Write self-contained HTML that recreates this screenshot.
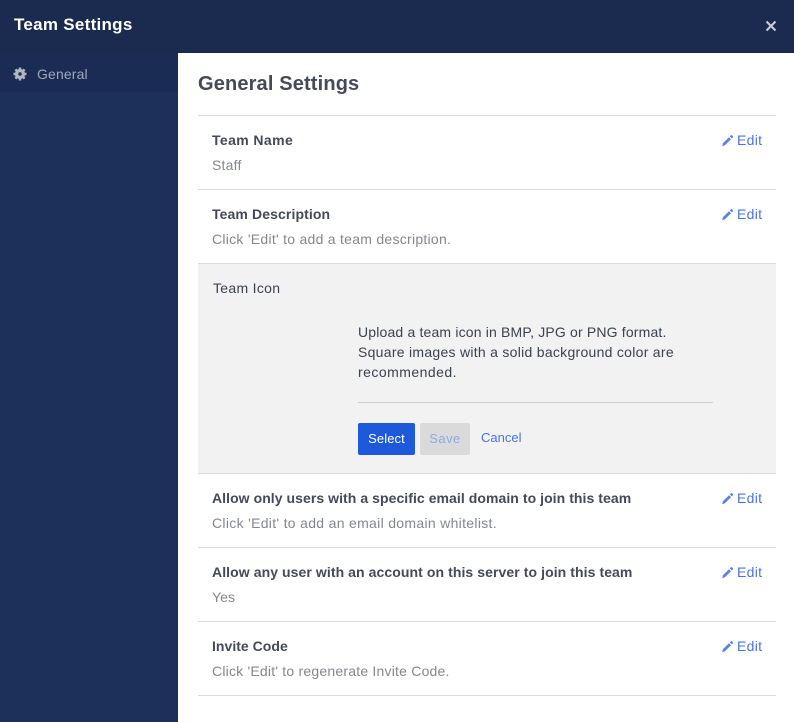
<!DOCTYPE html>
<html>
<head>
<meta charset="utf-8">
<style>
html,body{margin:0;padding:0;background:#fff}
body{width:794px;height:722px;position:relative;overflow:hidden;font-family:"Liberation Sans",sans-serif;font-size:14px;color:#3d3c40}
.a{position:absolute;white-space:nowrap}
.line{position:absolute;height:1px;background:#dcdcdc}
.t{font-weight:700;color:#454958;line-height:20px;font-size:14px;letter-spacing:.06px}
.v{color:#85878f;line-height:20px;font-size:14px;letter-spacing:.27px}
.e{color:#4a75de;line-height:20px;font-size:14px;letter-spacing:.3px}
svg{position:absolute;display:block}
</style>
</head>
<body>
<div class="a" style="left:0;top:0;width:794px;height:53px;background:#1b2b4f"></div>
<div class="a" style="left:0;top:53px;width:178px;height:669px;background:#1d3059"></div>
<div class="a" style="left:0;top:53px;width:178px;height:39px;background:#1a2c53"></div>
<div class="a" style="left:14px;top:15px;line-height:20px;font-size:17px;font-weight:700;color:#fff;letter-spacing:.28px">Team Settings</div>
<svg style="left:765px;top:19.5px" width="12" height="12" viewBox="0 0 12 12"><path d="M1.5 1.5L10.5 10.5M10.5 1.5L1.5 10.5" stroke="#c9ccd4" stroke-width="2.1" fill="none"/></svg>
<svg style="left:12.7px;top:66.7px" width="14" height="14" viewBox="0 0 14 14"><circle cx="7" cy="7" r="3.7" fill="none" stroke="#b0b6c4" stroke-width="2.8"/><path d="M7 .5V13.5M.5 7H13.5M2.4 2.4L11.6 11.6M11.6 2.4L2.4 11.6" stroke="#b0b6c4" stroke-width="2.4"/><circle cx="7" cy="7" r="1.7" fill="#1a2c53"/></svg>
<div class="a" style="left:37px;top:64px;line-height:20px;color:#a0a7b8;letter-spacing:.14px">General</div>

<div class="a" style="left:198px;top:72px;line-height:24px;font-size:20px;font-weight:700;color:#454958;letter-spacing:.15px">General Settings</div>

<div class="line" style="left:198px;top:115px;width:578px"></div>
<div class="a t" style="left:212px;top:130px;letter-spacing:.4px">Team Name</div>
<div class="a v" style="left:212px;top:155px;letter-spacing:.22px">Staff</div>
<svg style="left:721px;top:134px" width="13" height="13" viewBox="0 0 13 13"><path d="M1.2 12.3L1.9 9.3L8 3.2L10 5.2L3.9 11.3Z" fill="#5b82e0"/><path d="M8.8 2.4L10 1.2Q10.5 .9 11 1.2L12 2.2Q12.3 2.7 12 3.2L10.8 4.4Z" fill="#5b82e0"/></svg>
<div class="a e" style="left:737px;top:130px">Edit</div>

<div class="line" style="left:198px;top:189px;width:578px"></div>
<div class="a t" style="left:212px;top:204px;letter-spacing:.11px">Team Description</div>
<div class="a v" style="left:212px;top:229px">Click 'Edit' to add a team description.</div>
<svg style="left:721px;top:208px" width="13" height="13" viewBox="0 0 13 13"><path d="M1.2 12.3L1.9 9.3L8 3.2L10 5.2L3.9 11.3Z" fill="#5b82e0"/><path d="M8.8 2.4L10 1.2Q10.5 .9 11 1.2L12 2.2Q12.3 2.7 12 3.2L10.8 4.4Z" fill="#5b82e0"/></svg>
<div class="a e" style="left:737px;top:204px">Edit</div>

<div class="a" style="left:198px;top:263px;width:578px;height:210px;background:#f2f2f2"></div>
<div class="line" style="left:198px;top:263px;width:578px"></div>
<div class="a" style="left:213px;top:278px;line-height:20px;color:#3d4150;letter-spacing:.3px">Team Icon</div>
<div class="a" style="left:358px;top:322px;line-height:20px;color:#3d4150;letter-spacing:.17px">Upload a team icon in BMP, JPG or PNG format.</div>
<div class="a" style="left:358px;top:342px;line-height:20px;color:#3d4150;letter-spacing:.28px">Square images with a solid background color are</div>
<div class="a" style="left:358px;top:362px;line-height:20px;color:#3d4150;letter-spacing:.47px">recommended.</div>
<div class="line" style="left:358px;top:402px;width:355px;background:#cfcfcf"></div>
<div class="a" style="left:358px;top:423px;width:57px;height:32px;background:#1e59dc;border-radius:2px;color:#fff;font-size:13px;line-height:31px;text-align:center;letter-spacing:.1px">Select</div>
<div class="a" style="left:420px;top:423px;width:50px;height:32px;background:#dadada;border-radius:2px;color:#8fa9e2;font-size:13px;line-height:31px;text-align:center;letter-spacing:.45px">Save</div>
<div class="a" style="left:481px;top:428px;color:#4a75de;font-size:13px;line-height:20px;letter-spacing:0">Cancel</div>

<div class="line" style="left:198px;top:473px;width:578px"></div>
<div class="a t" style="left:212px;top:488px">Allow only users with a specific email domain to join this team</div>
<div class="a v" style="left:212px;top:513px;letter-spacing:.31px">Click 'Edit' to add an email domain whitelist.</div>
<svg style="left:721px;top:492px" width="13" height="13" viewBox="0 0 13 13"><path d="M1.2 12.3L1.9 9.3L8 3.2L10 5.2L3.9 11.3Z" fill="#5b82e0"/><path d="M8.8 2.4L10 1.2Q10.5 .9 11 1.2L12 2.2Q12.3 2.7 12 3.2L10.8 4.4Z" fill="#5b82e0"/></svg>
<div class="a e" style="left:737px;top:488px">Edit</div>

<div class="line" style="left:198px;top:547px;width:578px"></div>
<div class="a t" style="left:212px;top:562px;letter-spacing:.08px">Allow any user with an account on this server to join this team</div>
<div class="a v" style="left:212px;top:587px;letter-spacing:.1px">Yes</div>
<svg style="left:721px;top:566px" width="13" height="13" viewBox="0 0 13 13"><path d="M1.2 12.3L1.9 9.3L8 3.2L10 5.2L3.9 11.3Z" fill="#5b82e0"/><path d="M8.8 2.4L10 1.2Q10.5 .9 11 1.2L12 2.2Q12.3 2.7 12 3.2L10.8 4.4Z" fill="#5b82e0"/></svg>
<div class="a e" style="left:737px;top:562px">Edit</div>

<div class="line" style="left:198px;top:621px;width:578px"></div>
<div class="a t" style="left:212px;top:636px;letter-spacing:.03px">Invite Code</div>
<div class="a v" style="left:212px;top:661px;letter-spacing:.21px">Click 'Edit' to regenerate Invite Code.</div>
<svg style="left:721px;top:640px" width="13" height="13" viewBox="0 0 13 13"><path d="M1.2 12.3L1.9 9.3L8 3.2L10 5.2L3.9 11.3Z" fill="#5b82e0"/><path d="M8.8 2.4L10 1.2Q10.5 .9 11 1.2L12 2.2Q12.3 2.7 12 3.2L10.8 4.4Z" fill="#5b82e0"/></svg>
<div class="a e" style="left:737px;top:636px">Edit</div>

<div class="line" style="left:198px;top:695px;width:578px"></div>
</body>
</html>
